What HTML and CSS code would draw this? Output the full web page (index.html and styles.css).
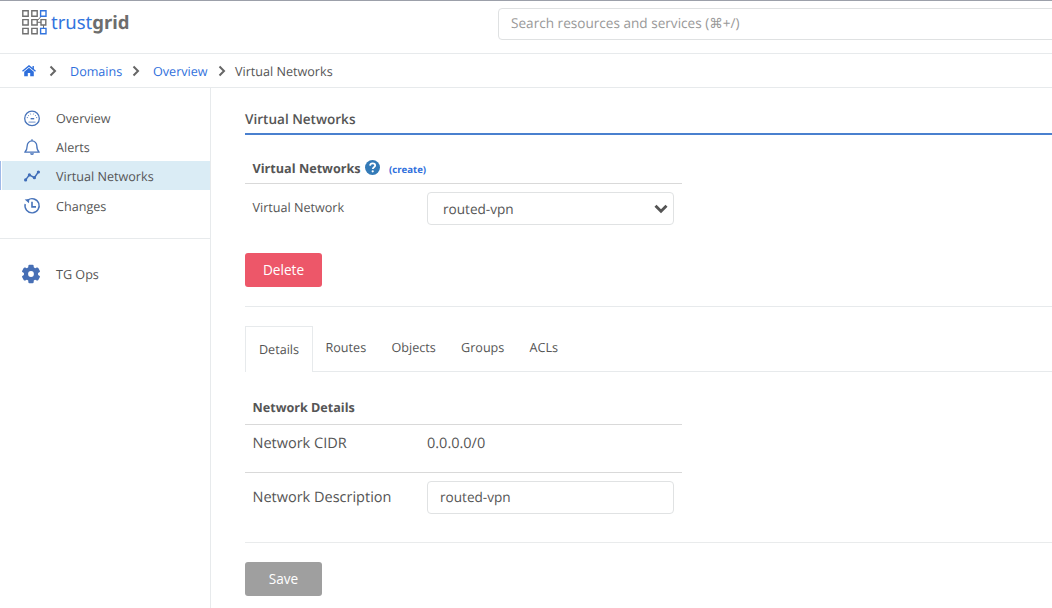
FILE: index.html
```html
<!DOCTYPE html>
<html lang="en">
<head>
<meta charset="utf-8">
<title>Trustgrid - Virtual Networks</title>
<link rel="stylesheet" href="styles.css">
</head>
<body>
<header class="topbar">
  <div class="logo">
    <svg class="logo-mark" width="25" height="25" viewBox="0 0 25 25" fill="none" stroke="#707070" stroke-width="1.4">
      <path d="M.8.8h5.400v5.400H.8zM9.800.8h5.400v5.400H9.800zM.8 9.600h5.400V15H.8zM9.800 9.600h5.400V15H9.800zM.8 18.400h5.400v5.400H.8zM9.800 18.400h5.400v5.400H9.800zM19 9.600h4.800V15H19z"/>
      <path d="M15.200 12.300H19M15.500 10.500l3.500-4M21.500 15v3.400" stroke-width="1"/>
      <path d="M18.600.8H24v5.400h-5.400zM18.600 18.400H24v5.400h-5.400z" stroke="#3274de"/>
    </svg>
    <span class="logo-text">trust<b>grid</b></span>
  </div>
  <div class="search">Search resources and services (⌘+/)</div>
</header>
<nav class="crumbs">
  <svg class="home" width="14" height="12" viewBox="0 0 14 12" fill="#2f6fdc"><path d="M7 2.700 2.200 6.700v4.600h3.600V8h2.400v3.300h3.600V6.700z"/><path d="M.5 6.200 7 .9l6.500 5.300M11.200 1v3" fill="none" stroke="#2f6fdc" stroke-width="1.400"/></svg>
  <svg class="chev c1" width="8" height="12" viewBox="0 0 8 12"><path d="m1.500 1.500 4.500 4.500-4.500 4.500"/></svg>
  <a class="link domains">Domains</a>
  <svg class="chev c2" width="8" height="12" viewBox="0 0 8 12"><path d="m1.500 1.500 4.500 4.500-4.500 4.500"/></svg>
  <a class="link overview">Overview</a>
  <svg class="chev c3" width="8" height="12" viewBox="0 0 8 12"><path d="m1.500 1.500 4.500 4.500-4.500 4.500"/></svg>
  <span>Virtual Networks</span>
</nav>
<div class="layout">
  <aside class="sidebar">
    <ul class="menu">
      <li class="item"><svg width="18" height="18" viewBox="0 0 18 18" fill="none" stroke="#4773ba" stroke-width="1.300"><circle cx="9" cy="9.400" r="7.300"/><path d="M3.800 8.600h1.200M13 8.600h1.200M5 6.200l.9.700M7.300 4.500l.3 1M10.700 4.500l-.3 1M13 6.200l-.9.700M5.500 13.100h7" stroke-width=".8"/><path d="M7.600 9.700h3.600" stroke-width="1.400"/></svg><span>Overview</span></li>
      <li class="item"><svg width="18" height="18" viewBox="0 0 18 18" fill="none" stroke="#4773ba" stroke-width="1.300"><path d="M1.800 14.200c1.700-1.500 2.400-3 2.400-6.400a4.800 4.900 0 0 1 9.600 0c0 3.400.7 4.900 2.400 6.400z" stroke-linejoin="round"/><path d="M9 1.200v1.600"/><path d="M7 15.200h4a2 1.700 0 0 1-4 0z" fill="#4773ba" stroke="none"/></svg><span>Alerts</span></li>
      <li class="item active"><svg width="18" height="18" viewBox="0 0 18 18" fill="#3f6db8"><path d="m2.600 12.900 3.800-5 5 2.800 4-5.800" fill="none" stroke="#3f6db8" stroke-width="1.500"/><circle cx="2.600" cy="12.900" r="1.600"/><circle cx="6.400" cy="7.900" r="1.600"/><circle cx="11.400" cy="10.700" r="1.600"/><circle cx="15.400" cy="5" r="1.600"/></svg><span>Virtual Networks</span></li>
      <li class="item changes"><svg width="18" height="18" viewBox="0 0 18 18" fill="none" stroke="#4773ba" stroke-width="1.400"><path d="M4.800 3.100A7.100 7.100 0 1 1 2.200 7"/><path d="M9 4.700v5.200h4" stroke-width="1.600"/><path d="M1.700 2.400 6.300 1.900 6 6.200z" fill="#4773ba" stroke="none"/></svg><span>Changes</span></li>
    </ul>
    <div class="item ops"><svg width="20" height="20" viewBox="0 0 20 20"><g fill="#476fb5"><circle cx="10" cy="10" r="7.200"/><rect x="7.300" y=".7" width="5.400" height="18.600" rx="1.200"/><rect x="7.300" y=".7" width="5.400" height="18.600" rx="1.200" transform="rotate(60 10 10)"/><rect x="7.300" y=".7" width="5.400" height="18.600" rx="1.200" transform="rotate(120 10 10)"/></g><circle cx="10" cy="10" r="2.900" fill="#fff"/></svg><span>TG Ops</span></div>
  </aside>
  <main class="main">
    <h1 class="title">Virtual Networks</h1>
    <section class="panel">
      <div class="panel-head"><span class="net-heading">Virtual Networks</span>
        <svg class="help" width="15" height="15" viewBox="0 0 14 14"><circle cx="7" cy="7" r="7" fill="#337ab7"/><path d="M4.700 5.300C4.900 3.700 5.800 3.200 7.100 3.200c1.400 0 2.400.8 2.400 2 0 1.700-2.200 1.600-2.200 3.200" fill="none" stroke="#fff" stroke-width="1.700"/><circle cx="7.200" cy="10.500" r="1.050" fill="#fff"/></svg>
        <a class="create">(create)</a></div>
      <div class="field"><label class="label small">Virtual Network</label>
        <div class="control select"><span>routed-vpn</span><svg width="14" height="10" viewBox="0 0 14 10"><path d="m1.500 1.800 5.500 5.400 5.500-5.400" fill="none" stroke="#555" stroke-width="2.900"/></svg></div></div>
    </section>
    <button class="btn delete">Delete</button>
    <div class="tabs"><span class="tab selected">Details</span><span class="tab routes">Routes</span><span class="tab objects">Objects</span><span class="tab groups">Groups</span><span class="tab acls">ACLs</span></div>
    <section class="panel details">
      <h2 class="subhead">Network Details</h2>
      <div class="field cidr"><span class="label">Network CIDR</span><span class="value">0.0.0.0/0</span></div>
      <div class="field"><label class="label description">Network Description</label><div class="control">routed-vpn</div></div>
    </section>
    <div class="actions"><button class="btn save">Save</button></div>
  </main>
</div>
</body>
</html>
```
FILE: styles.css
```css
* { box-sizing: border-box; }
body {
  margin: 0;
  height: 608px;
  overflow: hidden;
  display: flex;
  flex-direction: column;
  background: #fff;
  color: #555;
  font: 12.600px/20px "Open Sans", sans-serif;
  text-rendering: geometricPrecision;
}
svg { flex: none; display: block; }
.topbar {
  height: 54px;
  flex: none;
  display: flex;
  border-top: 1px solid #9ca0aa;
  border-bottom: 1px solid #e7eaec;
}
.logo { width: 498px; flex: none; display: flex; align-items: flex-start; padding: 9px 0 0 22px; }
.logo-text {
  margin: 1px 0 0 4px;
  font: 400 18.500px/24px "Noto Sans", sans-serif;
  color: #3274de;
}
.logo-text b { color: #6d6d6d; font-weight: 700; }
.search {
  width: 600px;
  flex: none;
  height: 32px;
  margin-top: 7px;
  padding-left: 12px;
  border: 1px solid #dfe1e2;
  border-radius: 4px;
  font-size: 13.600px;
  line-height: 28px;
  color: #999;
}
.crumbs {
  height: 34px;
  flex: none;
  display: flex;
  align-items: center;
  padding: 1px 0 0 22px;
  border-bottom: 1px solid #e7eaec;
}
.crumbs a, .crumbs span { padding-top: 2px; }
.link { color: #2f6fdc; }
.domains { width: 52px; }
.overview { width: 55px; }
.chev path { fill: none; stroke: #666; stroke-width: 2; }
.c1 { margin: 0 13px; }
.c2 { margin: 0 13px 0 10px; }
.c3 { margin: 0 9px 0 10px; }
.layout { flex: 1; display: flex; min-height: 0; }
.sidebar { width: 211px; flex: none; border-right: 1px solid #e7eaec; }
.menu {
  height: 151px;
  margin: 0;
  padding: 15px 0 0;
  list-style: none;
  border-bottom: 1px solid #e7eaec;
}
.item { height: 29px; display: flex; align-items: center; padding-left: 23px; }
.item svg { margin-right: 15px; }
.item span { padding-top: 2px; }
.item.active { background: #daecf5; border-left: 1px solid #9fb9e8; padding-left: 22px; box-shadow: inset 1px 0 #fff; }
.changes { height: 31px; }
.ops { margin-top: 20px; padding-left: 21px; }
.ops svg { margin-right: 15px; }
.main { flex: 1; min-width: 0; padding: 21px 0 0 34px; }
.title {
  height: 26px;
  margin: 0;
  font-size: 13.550px;
  font-weight: 600;
  line-height: 20px;
  border-bottom: 2px solid #4a80cf;
}
.panel { width: 437px; }
.panel-head {
  height: 49px;
  display: flex;
  align-items: center;
  padding: 18px 0 0 7.500px;
  border-bottom: 1px solid #d9d9d9;
  font-size: 12.650px;
  font-weight: 700;
}
.net-heading { width: 108px; white-space: nowrap; }
.help { margin: -2px 9px 0 4.500px; }
.create { color: #2f6fdc; font-size: 9.600px; padding-top: 3px; }
.field { display: flex; align-items: flex-start; padding: 8px 8px 0 7.500px; }
.label { width: 174.500px; flex: none; font-size: 14.500px; line-height: 32px; }
.label.small { font-size: 12.600px; line-height: 31px; }
.label.description { padding-top: 1px; }
.control {
  width: 247px;
  height: 33px;
  border: 1px solid #e0e2e3;
  border-radius: 4px;
  padding: 0 12px;
  font-size: 13.600px;
  line-height: 30px;
}
.select { display: flex; align-items: center; justify-content: space-between; padding: 0 5px 0 15px; }
.btn {
  display: block;
  width: 77px;
  height: 34px;
  padding: 0;
  border: 0;
  border-radius: 3px;
  font: 13.600px/34px "Open Sans", sans-serif;
  color: #fff;
}
.delete { margin-top: 28px; background: #ed5769; }
.save { background: #9f9f9f; }
.tabs {
  height: 66px;
  margin-top: 19px;
  padding-top: 19px;
  display: flex;
  border-top: 1px solid #e7eaec;
  border-bottom: 1px solid #e7eaec;
  font-size: 12.600px;
  line-height: 44px;
}
.selected { width: 68px; height: 46px; text-align: center; line-height: 46px; background: #fff; border: 1px solid #e7eaec; border-bottom: 0; }
.routes { margin-left: 12.500px; width: 66px; }
.objects { width: 69.500px; }
.groups { width: 68.500px; }
.subhead { height: 53px; margin: 0; padding: 26px 0 0 7.500px; font-size: 12.600px; line-height: 20px; font-weight: 700; border-bottom: 1px solid #d9d9d9; }
.cidr { height: 48px; padding-top: 3px; border-bottom: 1px solid #d9d9d9; }
.value { font-size: 14.500px; line-height: 32px; }
.actions { margin-top: 28px; padding-top: 19px; border-top: 1px solid #e9ebec; }
```
